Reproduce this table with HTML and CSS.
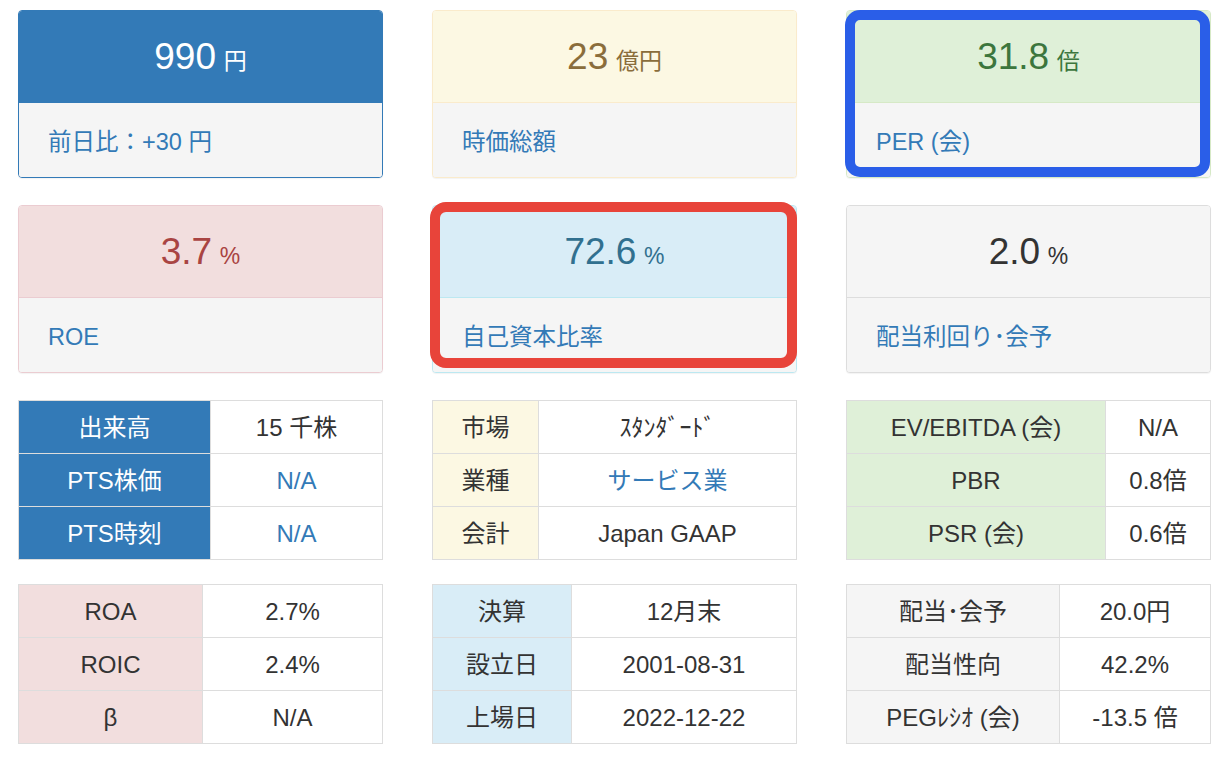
FILE: index.html
```html
<!DOCTYPE html>
<html lang="ja">
<head>
<meta charset="utf-8">
<title>指標</title>
<link rel="stylesheet" href="styles.css">
</head>
<body>
<div class="page">
  <div class="panels">
    <div class="panel p-primary">
      <div class="ph"><div class="val"><span class="num">990</span> <span class="unit">円</span></div></div>
      <div class="pf">前日比：+30 円</div>
    </div>
    <div class="panel p-warning">
      <div class="ph"><div class="val"><span class="num">23</span> <span class="unit">億円</span></div></div>
      <div class="pf">時価総額</div>
    </div>
    <div class="panel p-success hl-blue">
      <div class="ph"><div class="val"><span class="num">31.8</span> <span class="unit">倍</span></div></div>
      <div class="pf">PER (会)</div>
    </div>
    <div class="panel p-danger">
      <div class="ph"><div class="val"><span class="num">3.7</span> <span class="unit">%</span></div></div>
      <div class="pf">ROE</div>
    </div>
    <div class="panel p-info hl-red">
      <div class="ph"><div class="val"><span class="num">72.6</span> <span class="unit">%</span></div></div>
      <div class="pf">自己資本比率</div>
    </div>
    <div class="panel p-default">
      <div class="ph"><div class="val"><span class="num">2.0</span> <span class="unit">%</span></div></div>
      <div class="pf">配当利回り･会予</div>
    </div>
  </div>

  <div class="tables">
    <table class="tbl t-primary w1">
      <colgroup><col class="lc"><col></colgroup>
      <tr><th>出来高</th><td>15 千株</td></tr>
      <tr><th>PTS株価</th><td class="link">N/A</td></tr>
      <tr><th>PTS時刻</th><td class="link">N/A</td></tr>
    </table>
    <table class="tbl t-warning w2">
      <colgroup><col class="lc"><col></colgroup>
      <tr><th>市場</th><td>ｽﾀﾝﾀﾞｰﾄﾞ</td></tr>
      <tr><th>業種</th><td class="link">サービス業</td></tr>
      <tr><th>会計</th><td>Japan GAAP</td></tr>
    </table>
    <table class="tbl t-success w3">
      <colgroup><col class="lc"><col></colgroup>
      <tr><th>EV/EBITDA (会)</th><td>N/A</td></tr>
      <tr><th>PBR</th><td>0.8倍</td></tr>
      <tr><th>PSR (会)</th><td>0.6倍</td></tr>
    </table>
    <table class="tbl t-danger w4">
      <colgroup><col class="lc"><col></colgroup>
      <tr><th>ROA</th><td>2.7%</td></tr>
      <tr><th>ROIC</th><td>2.4%</td></tr>
      <tr><th>β</th><td>N/A</td></tr>
    </table>
    <table class="tbl t-info w5">
      <colgroup><col class="lc"><col></colgroup>
      <tr><th>決算</th><td>12月末</td></tr>
      <tr><th>設立日</th><td>2001-08-31</td></tr>
      <tr><th>上場日</th><td>2022-12-22</td></tr>
    </table>
    <table class="tbl t-default w6">
      <colgroup><col class="lc"><col></colgroup>
      <tr><th>配当･会予</th><td>20.0円</td></tr>
      <tr><th>配当性向</th><td>42.2%</td></tr>
      <tr><th>PEGﾚｼｵ (会)</th><td>-13.5 倍</td></tr>
    </table>
  </div>
</div>
</body>
</html>
```

FILE: styles.css
```css
* { box-sizing: border-box; }
html, body { margin: 0; padding: 0; background: #fff; }
body {
  font-family: "Liberation Sans", "Noto Sans CJK JP", sans-serif;
  font-size: 24px;
  line-height: 1.2;
  color: #333;
}
.page { padding: 10px 0 0 18px; }

.panels {
  display: grid;
  grid-template-columns: repeat(3, 365px);
  column-gap: 49px;
  row-gap: 27px;
  margin-bottom: 27px;
}
.panel {
  position: relative;
  height: 168px;
  border: 1px solid #ddd;
  border-radius: 4px;
  background: #fff;
  box-shadow: 0 1px 1px rgba(0,0,0,.05);
  display: flex;
  flex-direction: column;
}
.ph {
  height: 92px;
  border-bottom: 1px solid #ddd;
  border-radius: 3px 3px 0 0;
  display: flex;
  align-items: center;
  justify-content: center;
  padding-top: 4px;
}
.val { white-space: nowrap; line-height: 40px; }
.num { font-size: 37px; }
.unit { font-size: 23px; margin-left: 1px; }
.pf {
  flex: 1;
  background: #f5f5f5;
  border-radius: 0 0 3px 3px;
  display: flex;
  align-items: center;
  padding: 4px 0 0 29px;
  color: #337ab7;
  font-size: 23.5px;
}

.p-primary { border-color: #337ab7; }
.p-primary .ph { background: #337ab7; color: #fff; border-color: #337ab7; }
.p-warning { border-color: #faebcc; }
.p-warning .ph { background: #fcf8e3; color: #8a6d3b; border-color: #faebcc; }
.p-success { border-color: #d6e9c6; }
.p-success .ph { background: #dff0d8; color: #3c763d; border-color: #d6e9c6; }
.p-danger { border-color: #ebccd1; }
.p-danger .ph { background: #f2dede; color: #a94442; border-color: #ebccd1; }
.p-info { border-color: #bce8f1; }
.p-info .ph { background: #d9edf7; color: #31708f; border-color: #bce8f1; }
.p-default { border-color: #ddd; }
.p-default .ph { background: #f5f5f5; color: #333; border-color: #ddd; }

.hl-blue::after,
.hl-red::after {
  content: "";
  position: absolute;
  pointer-events: none;
  border-style: solid;
  border-width: 10px;
}
.hl-blue::after {
  top: -1px; left: -2px; right: 0; bottom: 0;
  border-color: #2a5ee8;
  border-radius: 15px;
}
.hl-red::after {
  top: -4px; left: -3px; right: -1px; bottom: 4px;
  border-color: #e8443a;
  border-radius: 16px;
}

.tables {
  display: grid;
  grid-template-columns: repeat(3, 365px);
  column-gap: 49px;
  row-gap: 24px;
}
.tbl {
  width: 365px;
  border-collapse: collapse;
  table-layout: fixed;
}
.tbl th, .tbl td {
  border: 1px solid #ddd;
  height: 53px;
  padding: 2px 0 0;
  text-align: center;
  vertical-align: middle;
  font-weight: normal;
  color: #333;
  white-space: nowrap;
}
.tbl td { background: #fff; }
.tbl td.link { color: #337ab7; }

.t-primary th { background: #337ab7; color: #fff; }
.t-warning th { background: #fcf8e3; }
.t-success th { background: #dff0d8; }
.t-danger th { background: #f2dede; }
.t-info th { background: #d9edf7; }
.t-default th { background: #f5f5f5; }

.w1 .lc { width: 192px; }
.w2 .lc { width: 106px; }
.w3 .lc { width: 259px; }
.w4 .lc { width: 184px; }
.w5 .lc { width: 139px; }
.w6 .lc { width: 213px; }
```
